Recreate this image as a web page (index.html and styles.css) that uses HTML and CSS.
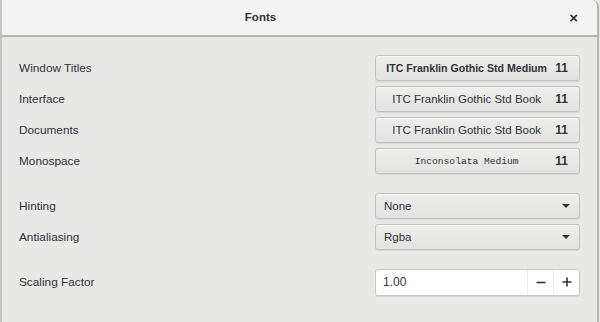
FILE: index.html
```html
<!DOCTYPE html>
<html>
<head>
<meta charset="utf-8">
<link rel="stylesheet" href="styles.css">
</head>
<body>
<div class="window">
  <header class="titlebar">
    <span class="title">Fonts</span>
    <span class="close">×</span>
  </header>
  <main class="content">
    <span class="focus-bar"></span>
    <section class="group">
      <div class="row">
        <span class="label">Window Titles</span>
        <button class="font-btn"><span class="fname bold">ITC Franklin Gothic Std Medium</span><span class="fsize">11</span></button>
      </div>
      <div class="row">
        <span class="label">Interface</span>
        <button class="font-btn"><span class="fname">ITC Franklin Gothic Std Book</span><span class="fsize">11</span></button>
      </div>
      <div class="row">
        <span class="label">Documents</span>
        <button class="font-btn"><span class="fname">ITC Franklin Gothic Std Book</span><span class="fsize">11</span></button>
      </div>
      <div class="row">
        <span class="label">Monospace</span>
        <button class="font-btn"><span class="fname mono">Inconsolata Medium</span><span class="fsize">11</span></button>
      </div>
    </section>
    <section class="group">
      <div class="row">
        <span class="label">Hinting</span>
        <button class="combo"><span>None</span><span class="arrow"></span></button>
      </div>
      <div class="row">
        <span class="label">Antialiasing</span>
        <button class="combo"><span>Rgba</span><span class="arrow"></span></button>
      </div>
    </section>
    <section class="group">
      <div class="row">
        <span class="label">Scaling Factor</span>
        <div class="spin">
          <span class="spin-value">1.00</span>
          <span class="spin-btn">
            <svg width="10" height="10" viewBox="0 0 10 10"><path d="M0.5 5.5h9" stroke="#2e3436" stroke-width="1.6"/></svg>
          </span>
          <span class="spin-btn">
            <svg width="10" height="10" viewBox="0 0 10 10"><path d="M0.5 5h9M5 0.5v9" stroke="#2e3436" stroke-width="1.6"/></svg>
          </span>
        </div>
      </div>
    </section>
  </main>
</div>
</body>
</html>
```
FILE: styles.css
```css
* { box-sizing: border-box; }
html, body {
  margin: 0;
  padding: 0;
  width: 600px;
  height: 322px;
  overflow: hidden;
  background: #e8e8e7;
  font-family: "Liberation Sans", Arial, sans-serif;
  color: #2e3436;
}
.window {
  width: 599px;
  height: 322px;
  border-left: 2px solid #c4c4c2;
  border-right: 2px solid #b4b4b2;
  border-top-right-radius: 7px;
  background: #e8e8e7;
  display: flex;
  flex-direction: column;
  overflow: hidden;
}
.titlebar {
  height: 37px;
  flex: none;
  background: #f3f3f3;
  border-bottom: 2px solid #b3b3b1;
  display: flex;
  align-items: center;
  justify-content: center;
  position: relative;
}
.title {
  font-weight: bold;
  font-size: 11.5px;
  margin-left: -78px;
  margin-top: -2px;
  color: #2e3436;
}
.close {
  position: absolute;
  right: 19px;
  top: 9px;
  font-size: 15px;
  font-weight: bold;
  color: #2e3436;
}
.content {
  position: relative;
  padding: 18px 17px 0 17px;
  display: flex;
  flex-direction: column;
  gap: 19px;
}
.focus-bar {
  position: absolute;
  left: -2px;
  top: 87px;
  width: 2px;
  height: 21px;
  background: #4a90d9;
}
.group {
  display: flex;
  flex-direction: column;
  gap: 5px;
}
.row {
  display: flex;
  align-items: center;
  justify-content: space-between;
  height: 26px;
}
.label {
  font-size: 11.8px;
  color: #2e3436;
}
.font-btn, .combo {
  width: 205px;
  height: 26px;
  margin: 0;
  padding: 0 11px 0 10px;
  border: 1px solid #c2c2c0;
  border-radius: 3px;
  background: linear-gradient(#eeeeed, #e2e2e0);
  box-shadow: inset 0 1px #f6f6f6, 0 1px #d8d8d6;
  display: flex;
  align-items: center;
  font-family: "Liberation Sans", Arial, sans-serif;
  color: #2e3436;
}
.fname {
  flex: 1;
  text-align: center;
  font-size: 11.5px;
  white-space: nowrap;
}
.fname.bold { font-weight: bold; font-size: 10.6px; }
.fname.mono { font-family: "Liberation Mono", monospace; font-size: 9.6px; }
.fsize {
  font-size: 12px;
  font-weight: bold;
  margin-left: 8px;
}
.combo {
  justify-content: space-between;
  padding: 0 9px 0 8px;
  font-size: 11.5px;
}
.arrow {
  width: 0;
  height: 0;
  border-left: 4px solid transparent;
  border-right: 4px solid transparent;
  border-top: 4px solid #2e3436;
}
.spin {
  width: 205px;
  height: 27px;
  border: 1px solid #c8c8c6;
  border-radius: 3px;
  background: #ffffff;
  display: flex;
  align-items: stretch;
  box-shadow: 0 1px #d8d8d6;
}
.spin-value {
  flex: 1;
  display: flex;
  align-items: center;
  padding-left: 7px;
  font-size: 12px;
}
.spin-btn {
  width: 26px;
  display: flex;
  align-items: center;
  justify-content: center;
  border-left: 1px solid #ececea;
}
```
